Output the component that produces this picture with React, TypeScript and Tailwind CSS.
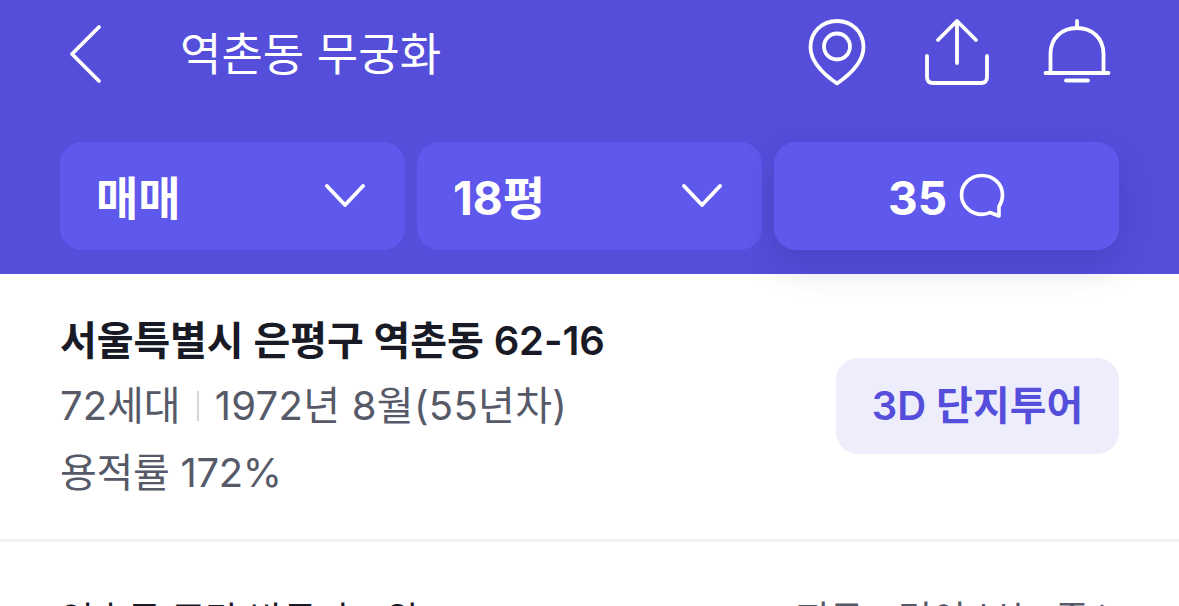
import React from 'react';

const FONT = "font-['Inter','Noto_Sans_CJK_KR',sans-serif]";

const ChevronDown = () => (
  <svg width="40" height="26" viewBox="0 0 40 26" fill="none" stroke="white" strokeWidth="3.8" strokeLinecap="round" strokeLinejoin="round">
    <path d="M2 3 L20 22 L38 3" />
  </svg>
);

const SelectButton = ({ label }: { label: string }) => (
  <div className="w-[345px] h-[108px] bg-[#5f58ec] rounded-[22px] flex items-center justify-between pl-[36px] pr-[40px]">
    <span className="text-[46px] font-bold text-white leading-[56px] pt-[4px]">{label}</span>
    <ChevronDown />
  </div>
);

const App: React.FC = () => {
  return (
    <div className={`${FONT} w-[1179px] h-[606px] overflow-hidden bg-white`}>
      {/* Header */}
      <div className="bg-[#544edb] h-[274px] px-[60px] flex flex-col">
        <div className="h-[142px] flex items-start">
          <div className="flex items-center pt-[22px] flex-1">
            <svg width="34" height="60" viewBox="0 0 34 60" fill="none" stroke="white" strokeWidth="3.8" strokeLinecap="round" strokeLinejoin="round" className="ml-[9px]">
              <path d="M30 3 L3 30 L30 57" />
            </svg>
            <span className="ml-[77px] text-[45px] text-white leading-[60px] pt-[3px]">역촌동 무궁화</span>
          </div>
          <div className="flex items-start pt-[18px] pr-[8px]">
            <svg width="58" height="70" viewBox="0 0 58 70" fill="none" stroke="white" strokeWidth="3.8" strokeLinecap="round" strokeLinejoin="round">
              <path d="M29 65.5 C21 60 2.5 47 2.5 29 C2.5 14 14 3 29 3 C44 3 55.5 14 55.5 29 C55.5 47 37 60 29 65.5 Z" />
              <circle cx="29" cy="28.5" r="13" />
            </svg>
            <svg width="66" height="70" viewBox="0 0 66 70" fill="none" stroke="white" strokeWidth="3.8" strokeLinecap="round" strokeLinejoin="round" className="ml-[58px]">
              <path d="M33 45 V3 M14 22 L33 3 L52 22" />
              <path d="M3 38 V59 Q3 65 9 65 H57 Q63 65 63 59 V38" />
            </svg>
            <svg width="68" height="66" viewBox="0 0 68 66" fill="none" stroke="white" strokeWidth="3.8" strokeLinecap="round" strokeLinejoin="round" className="ml-[53px]">
              <path d="M34 3 V8" />
              <path d="M7.5 55 V36 C7.5 20 19 10 34 10 C49 10 60.5 20 60.5 36 V55" />
              <path d="M2.5 55 H65.5" />
              <path d="M23 62.5 H45" />
            </svg>
          </div>
        </div>
        <div className="flex gap-[12px]">
          <SelectButton label="매매" />
          <SelectButton label="18평" />
          <div className="w-[345px] h-[108px] bg-[#5f58ec] rounded-[22px] flex items-center justify-center gap-[12px] shadow-[0_14px_34px_rgba(40,30,120,0.22)]">
            <span className="text-[46px] font-bold text-white leading-[56px] pt-[4px]">35</span>
            <svg width="46" height="46" viewBox="0 0 46 46" fill="none" stroke="white" strokeWidth="3.6" strokeLinecap="round" strokeLinejoin="round">
              <path d="M40 43 L31 39.5 C28.5 40.8 25.8 41.4 23 41.4 C12.5 41.4 2.5 33 2.5 22 C2.5 11 11.5 2.5 23 2.5 C34.5 2.5 43.5 11 43.5 22 C43.5 26.5 42 30.5 40 33.5 Z" />
            </svg>
          </div>
        </div>
      </div>

      {/* Info */}
      <div className="h-[268px] border-b-[3px] border-[#f1f1f3] px-[60px] flex items-start justify-between">
        <div className="pt-[42px]">
          <div className="text-[40px] font-semibold text-[#181a25] leading-[50px] tracking-[-0.1px]">서울특별시 은평구 역촌동 62-16</div>
          <div className="flex items-center text-[40px] text-[#565a68] leading-[50px] mt-[15px]">
            <span>72세대</span>
            <span className="w-[2px] h-[30px] bg-[#d5d6da] mx-[16px]" />
            <span className="tracking-[0.3px]">1972년 8월(55년차)</span>
          </div>
          <div className="text-[40px] text-[#565a68] leading-[50px] mt-[17px] tracking-[-0.3px]">용적률 172%</div>
        </div>
        <div className="mt-[84px] w-[283px] h-[96px] bg-[#eeedfb] rounded-[22px] flex items-center justify-center text-[40px] font-semibold text-[#544edb]">
          3D 단지투어
        </div>
      </div>

      {/* Next section, cut off by the window */}
      <div className="px-[60px] pt-[53px] flex justify-between items-start leading-[50px]">
        <span className="text-[36.7px] text-[#181a25]">역촌동 주간 방문자 4위</span>
        <span className="text-[37px] text-[#565a68] flex items-center gap-[10px]">
          지금 4명이 보는 중
          <svg width="20" height="34" viewBox="0 0 20 34" fill="none" stroke="#565a68" strokeWidth="3" strokeLinecap="round" strokeLinejoin="round">
            <path d="M3 3 L17 17 L3 31" />
          </svg>
        </span>
      </div>
    </div>
  );
};

export default App;
